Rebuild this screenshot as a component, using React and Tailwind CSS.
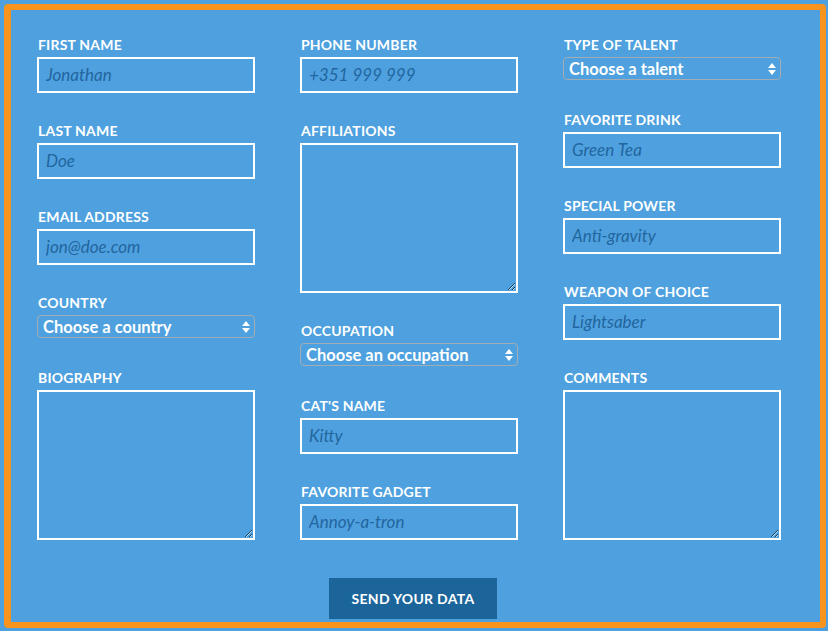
import React from "react";

function Field({ label, children }) {
  return (
    <div>
      <label className="mb-1 block pl-px text-[14px] font-bold uppercase leading-4 tracking-[0.2px] text-white">
        {label}
      </label>
      {children}
    </div>
  );
}

function TextInput({ placeholder }) {
  return (
    <input
      type="text"
      placeholder={placeholder}
      className="block h-9 w-[218px] border-2 border-white bg-transparent pb-[2px] pl-[7px] text-[17px] italic text-white outline-none placeholder:text-[#23659e]"
    />
  );
}

function TextArea() {
  return (
    <textarea className="block h-[150px] w-[218px] border-2 border-white bg-transparent px-[7px] text-[17px] text-white outline-none" />
  );
}

function Select({ text }) {
  return (
    <div className="relative mb-[2px] w-[218px]">
      <select className="block h-[23px] w-full appearance-none rounded-[4px] border border-[#a3acb3] bg-transparent pl-[5px] text-[16.5px] font-bold leading-5 text-white outline-none">
        <option>{text}</option>
      </select>
      {/* up / down arrows */}
      <svg
        className="pointer-events-none absolute right-[5px] top-[6px]"
        width="8"
        height="12"
        viewBox="0 0 8 12"
      >
        <path d="M4 0 L8 5 L0 5 Z" fill="#ffffff" />
        <path d="M0 7 L8 7 L4 12 Z" fill="#ffffff" />
      </svg>
    </div>
  );
}

export default function App() {
  return (
    <div className="h-[631px] w-[828px] bg-[#4ea1de] pl-1 pt-1 font-['Lato',sans-serif]">
      <div className="h-[624px] w-[822px] rounded-[4px] border-[6px] border-l-[7px] border-[#f8941e] pl-[26px] pt-[27px]">
        <div className="flex gap-[45px]">
          {/* column one */}
          <div className="flex flex-col gap-[30px]">
            <Field label="First name">
              <TextInput placeholder="Jonathan" />
            </Field>
            <Field label="Last name">
              <TextInput placeholder="Doe" />
            </Field>
            <Field label="Email address">
              <TextInput placeholder="jon@doe.com" />
            </Field>
            <Field label="Country">
              <Select text="Choose a country" />
            </Field>
            <Field label="Biography">
              <TextArea />
            </Field>
          </div>

          {/* column two */}
          <div className="flex flex-col gap-[30px]">
            <Field label="Phone number">
              <TextInput placeholder="+351 999 999" />
            </Field>
            <Field label="Affiliations">
              <TextArea />
            </Field>
            <Field label="Occupation">
              <Select text="Choose an occupation" />
            </Field>
            <Field label="Cat's name">
              <TextInput placeholder="Kitty" />
            </Field>
            <Field label="Favorite gadget">
              <TextInput placeholder="Annoy-a-tron" />
            </Field>
          </div>

          {/* column three */}
          <div className="flex flex-col gap-[30px]">
            <Field label="Type of talent">
              <Select text="Choose a talent" />
            </Field>
            <Field label="Favorite drink">
              <TextInput placeholder="Green Tea" />
            </Field>
            <Field label="Special power">
              <TextInput placeholder="Anti-gravity" />
            </Field>
            <Field label="Weapon of choice">
              <TextInput placeholder="Lightsaber" />
            </Field>
            <Field label="Comments">
              <TextArea />
            </Field>
          </div>
        </div>

        <div className="mt-[38px] flex w-[752px] justify-center">
          <button className="h-[41px] w-[168px] bg-[#1c659b] text-[14px] font-bold uppercase tracking-[0.3px] text-white">
            Send your data
          </button>
        </div>
      </div>
    </div>
  );
}
